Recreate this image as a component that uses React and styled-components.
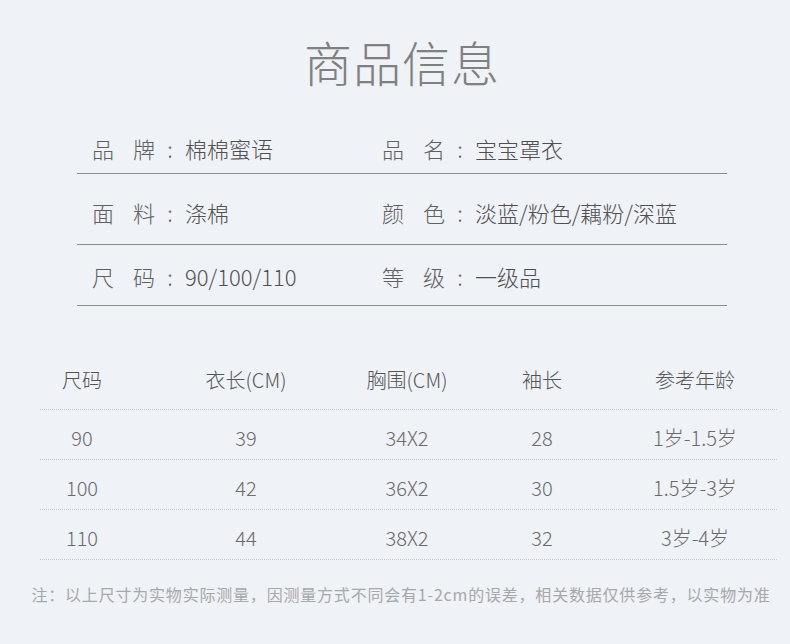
import React from "react";
import styled, { createGlobalStyle } from "styled-components";

const GlobalStyle = createGlobalStyle`
  html, body {
    margin: 0;
    padding: 0;
    background: #eff2f7;
  }
  body {
    font-family: "Noto Sans CJK SC", "Noto Sans", sans-serif;
  }
`;

const info = [
  { pt: 0, pb: 14, left: ["品牌", "棉棉蜜语"], right: ["品名", "宝宝罩衣"] },
  { pt: 27, pb: 21, left: ["面料", "涤棉"], right: ["颜色", "淡蓝/粉色/藕粉/深蓝"] },
  { pt: 20, pb: 18, left: ["尺码", "90/100/110"], right: ["等级", "一级品"] },
];

const headers = ["尺码", "衣长(CM)", "胸围(CM)", "袖长", "参考年龄"];

const sizes = [
  ["90", "39", "34X2", "28", "1岁-1.5岁"],
  ["100", "42", "36X2", "30", "1.5岁-3岁"],
  ["110", "44", "38X2", "32", "3岁-4岁"],
];

function Field({ label, value }) {
  return (
    <FieldBox>
      <Label>
        {label.split("").map((c) => (
          <span key={c}>{c}</span>
        ))}
      </Label>
      <Colon>:</Colon>
      <Value>{value}</Value>
    </FieldBox>
  );
}

function App() {
  return (
    <Page>
      <GlobalStyle />
      <Title>商品信息</Title>

      <InfoTable>
        {info.map((row, i) => (
          <InfoRow key={i} $pt={row.pt} $pb={row.pb}>
            <Field label={row.left[0]} value={row.left[1]} />
            <Field label={row.right[0]} value={row.right[1]} />
          </InfoRow>
        ))}
      </InfoTable>

      <SizeTable>
        <HeadRow>
          {headers.map((h) => (
            <Cell key={h}>{h}</Cell>
          ))}
        </HeadRow>
        {sizes.map((r) => (
          <DataRow key={r[0]}>
            {r.map((v, j) => (
              <Cell key={j}>{v}</Cell>
            ))}
          </DataRow>
        ))}
      </SizeTable>

      <Note>注：以上尺寸为实物实际测量，因测量方式不同会有1-2cm的误差，相关数据仅供参考，以实物为准</Note>
    </Page>
  );
}

export default App;

const Page = styled.div`
  width: 790px;
  height: 644px;
  box-sizing: border-box;
  padding-top: 37px;
  overflow: hidden;
`;

const Title = styled.h1`
  margin: 0;
  padding-left: 14px;
  text-align: center;
  font-size: 48px;
  line-height: 48px;
  font-weight: 300;
  color: #808080;
  letter-spacing: 1px;
`;

const InfoTable = styled.div`
  margin: 52px 0 0 77px;
  width: 650px;
`;

const InfoRow = styled.div`
  display: grid;
  grid-template-columns: 290px 1fr;
  padding: ${(p) => p.$pt}px 0 ${(p) => p.$pb}px 15px;
  border-bottom: 1px solid #8e8e8e;
`;

const FieldBox = styled.div`
  display: flex;
  align-items: center;
  font-size: 22px;
  line-height: 22px;
  font-weight: 300;
  color: #555;
`;

const Label = styled.div`
  width: 63px;
  display: flex;
  justify-content: space-between;
  color: #606060;
`;

const Colon = styled.span`
  width: 30px;
  text-align: center;
  color: #666;
`;

const Value = styled.span`
  color: #505050;
  white-space: nowrap;
`;

const SizeTable = styled.div`
  margin: 64px 0 0 40px;
  width: 737px;
`;

const rowGrid = `
  display: grid;
  grid-template-columns: 84px 244px 78px 192px 114px 1fr;
  border-bottom: 1px dotted #c4c7cc;
`;

const HeadRow = styled.div`
  ${rowGrid}
  padding-bottom: 19px;
  font-size: 20px;
  line-height: 20px;
  font-weight: 300;
  color: #555;
`;

const DataRow = styled.div`
  ${rowGrid}
  padding: 18px 0 11px;
  font-size: 20px;
  line-height: 20px;
  font-weight: 300;
  color: #6a6a6a;
`;

const Cell = styled.div`
  display: flex;
  justify-content: center;
  white-space: nowrap;
`;

const Note = styled.p`
  margin: 26px 0 0;
  padding-left: 12px;
  text-align: center;
  font-size: 16px;
  line-height: 16px;
  letter-spacing: 0.8px;
  color: #a8a8a8;
  white-space: nowrap;
`;
